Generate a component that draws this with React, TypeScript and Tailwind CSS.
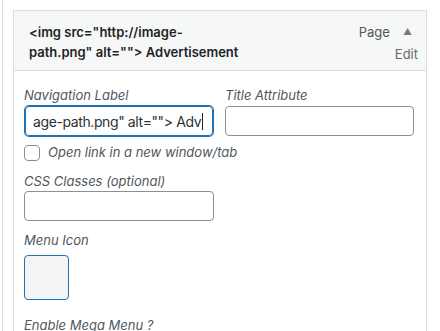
export default function App() {
  return (
    <div className="w-[440px] h-[331px] overflow-hidden bg-white font-['Inter',sans-serif] pl-[2px]">
      <div className="h-full border-l border-[#dcdcde] pl-[10px] pt-[10px]">
        <div className="w-[414px] h-full border border-b-0 border-[#dcdcde]">
          <div className="flex justify-between bg-[#f6f7f7] border-b border-[#dcdcde] pl-[15px] pr-[8px] pt-[11px] h-[60px]">
            <div className="text-[13px] leading-[20px] font-semibold text-[#1d2327]">
              &lt;img src="http://image-
              <br />
              path.png" alt=""&gt; Advertisement
            </div>
            <div className="flex flex-col items-end text-[13px] leading-[20px] text-[#50575e]">
              <div className="flex items-center">
                <span>Page</span>
                <span className="ml-[13px] mr-[6px] text-[9px] text-[#787c82]">▲</span>
              </div>
              <span className="mt-[2px] text-[#646970]">Edit</span>
            </div>
          </div>

          <div className="pl-[10px] pr-[12px] pt-[15px] text-[13px] text-[#50575e]">
            <div className="grid grid-cols-[190px_189px] gap-x-[11px]">
              <div>
                <div className="italic leading-[18px]">Navigation Label</div>
                <div className="mt-[2px] h-[30px] mx-[1px] rounded-[4px] border border-[#2271b1] shadow-[0_0_0_1px_#2271b1] flex items-center pl-[7px] text-[14px] tracking-[-0.4px] text-[#2c3338] whitespace-nowrap overflow-hidden">
                  age-path.png" alt=""&gt; Adv
                  <span className="inline-block w-[1px] h-[17px] bg-[#1d2327] ml-[1px]" />
                </div>
              </div>
              <div>
                <div className="italic leading-[18px]">Title Attribute</div>
                <input className="block mt-[2px] w-full h-[30px] rounded-[4px] border border-[#8c8f94] bg-white outline-none" />
              </div>
            </div>

            <label className="flex items-center mt-[9px] h-[16px]">
              <span className="w-[16px] h-[16px] rounded-[4px] border border-[#8c8f94] bg-white" />
              <span className="ml-[8px] italic">Open link in a new window/tab</span>
            </label>

            <div className="mt-[11px] italic leading-[18px]">CSS Classes (optional)</div>
            <input className="block mt-[1px] w-[190px] h-[30px] rounded-[4px] border border-[#8c8f94] bg-white outline-none" />

            <div className="mt-[10px] italic leading-[18px]">Menu Icon</div>
            <div className="mt-[6px] w-[45px] h-[45px] rounded-[4px] border border-[#2271b1] bg-[#f3f4f5]" />

            <div className="mt-[16px] italic leading-[18px]">Enable Mega Menu ?</div>
          </div>
        </div>
      </div>
    </div>
  );
}
